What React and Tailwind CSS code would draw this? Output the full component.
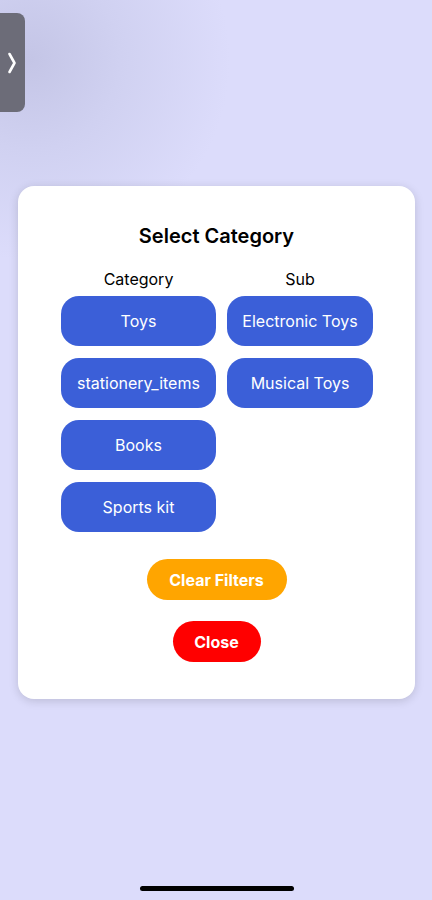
import React from "react";

const font = { fontFamily: "Inter, 'Noto Sans', sans-serif" };

function Btn({ children, w }) {
  return (
    <div
      className={`h-[50px] ${w} rounded-[18px] bg-[#3b5fd8] text-white text-[16px] flex items-center justify-center`}
    >
      {children}
    </div>
  );
}

export default function App() {
  return (
    <div
      className="relative w-[432px] h-[900px] overflow-hidden bg-[#dcdcfb]"
      style={font}
    >
      <div className="absolute inset-0 bg-[radial-gradient(circle_at_30px_60px,#c4c5e6_0px,#d0d1f1_90px,rgba(220,220,251,0)_200px)]" />
      {/* left tab */}
      <div className="absolute left-0 top-[13px] w-[25px] h-[99px] bg-[#6c6c78] rounded-r-[8px] flex items-center justify-center">
        <svg width="12" height="28" viewBox="0 0 12 28" className="ml-[-1px]">
          <path d="M3.5 5 L8.5 14 L3.5 23" stroke="white" strokeWidth="2.6" fill="none" strokeLinecap="round" strokeLinejoin="round" />
        </svg>
      </div>

      <div className="relative pt-[186px] px-[18px]">
        <div className="w-[397px] h-[513px] bg-white rounded-[16px] shadow-[0_2px_10px_rgba(0,0,0,0.15)] flex flex-col items-center pt-[37px]">
          <div className="text-[20px] font-semibold text-black leading-[26px]">Select Category</div>
          <div className="flex gap-[11px] mt-[20px] ml-[1px]">
            <div className="flex flex-col items-center w-[155px]">
              <div className="text-[16px] text-black leading-[20px] mb-[7px]">Category</div>
              <div className="flex flex-col gap-[12px] w-full">
                <Btn w="w-[155px]">Toys</Btn>
                <Btn w="w-[155px]">stationery_items</Btn>
                <Btn w="w-[155px]">Books</Btn>
                <Btn w="w-[155px]">Sports kit</Btn>
              </div>
            </div>
            <div className="flex flex-col items-center w-[146px]">
              <div className="text-[16px] text-black leading-[20px] mb-[7px]">Sub</div>
              <div className="flex flex-col gap-[12px] w-full">
                <Btn w="w-[146px]">Electronic Toys</Btn>
                <Btn w="w-[146px]">Musical Toys</Btn>
              </div>
            </div>
          </div>
          <div className="mt-[27px] h-[41px] w-[140px] rounded-full bg-[#ffa500] text-white text-[16px] font-bold flex items-center justify-center">
            Clear Filters
          </div>
          <div className="mt-[21px] h-[41px] w-[88px] rounded-full bg-[#ff0000] text-white text-[16px] font-bold flex items-center justify-center">
            Close
          </div>
        </div>
      </div>

      <div className="absolute left-[140px] top-[886px] w-[154px] h-[5px] rounded-full bg-black" />
    </div>
  );
}
